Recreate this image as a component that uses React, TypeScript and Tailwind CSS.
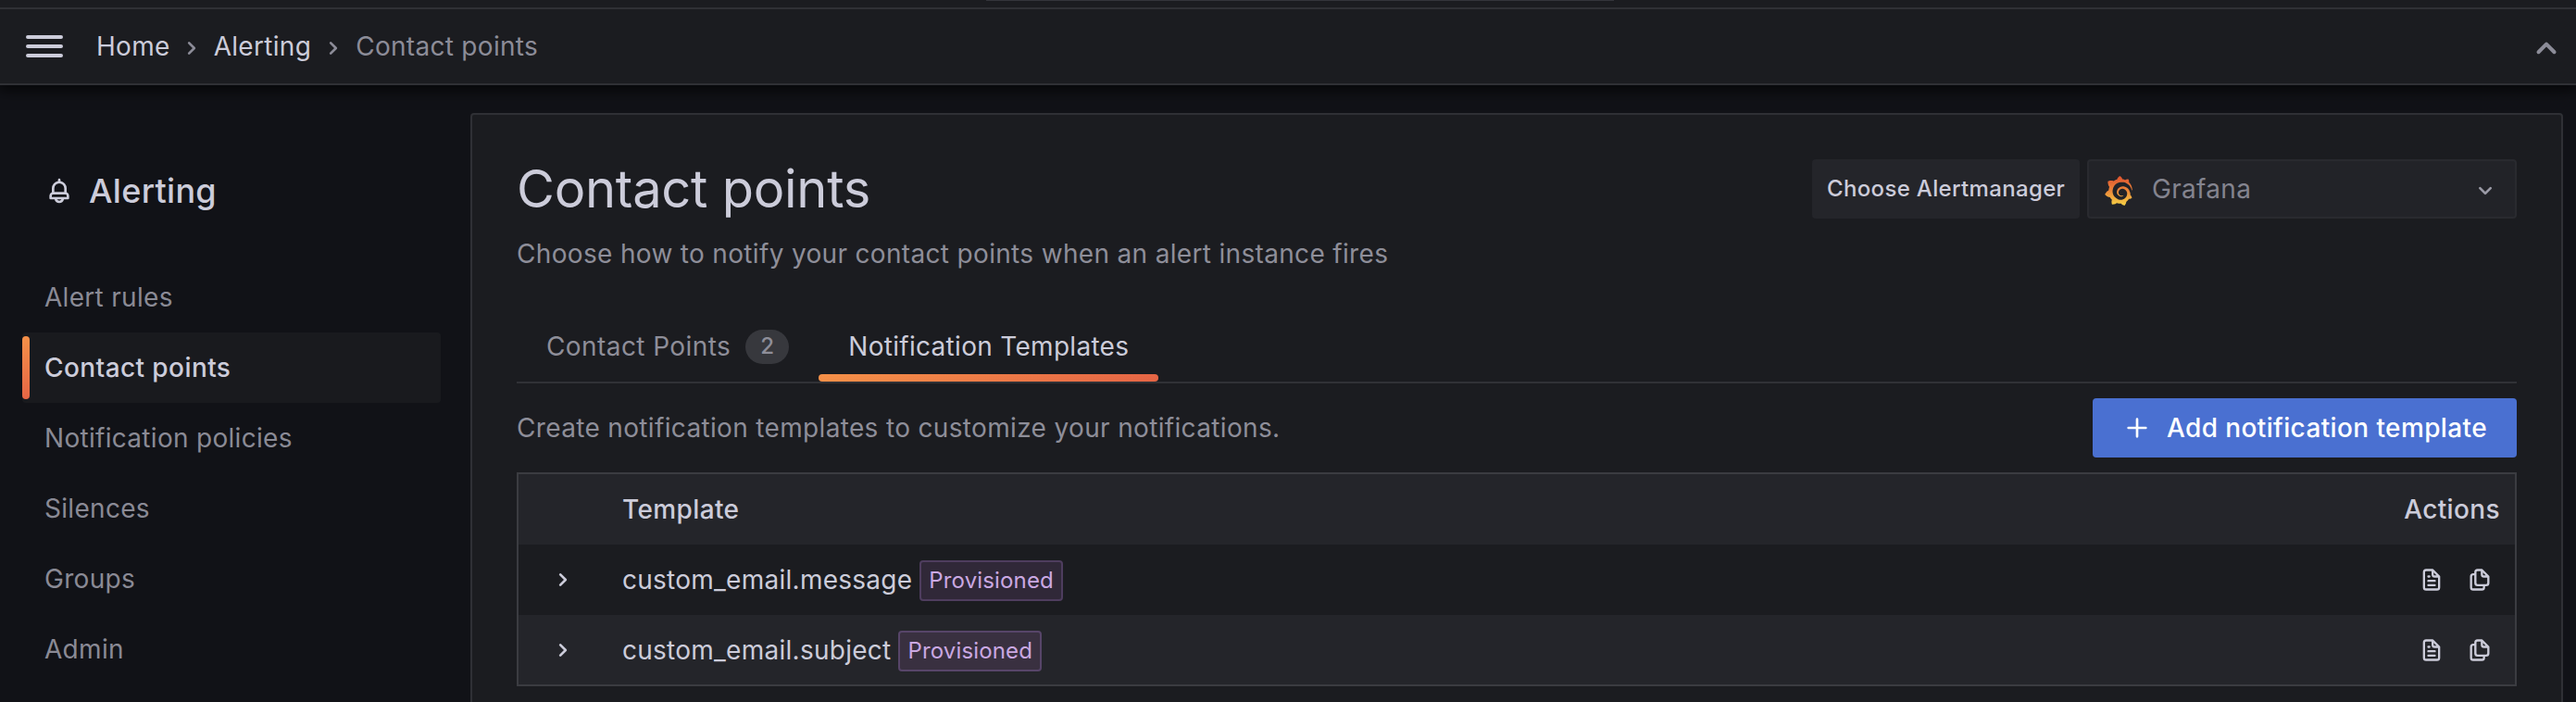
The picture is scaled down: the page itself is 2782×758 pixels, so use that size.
import React from 'react';
import { SiGrafana } from 'react-icons/si';

const paths = {
  bars: 'M3,8H21a1,1,0,0,0,0-2H3A1,1,0,0,0,3,8Zm18,8H3a1,1,0,0,0,0,2H21a1,1,0,0,0,0-2Zm0-5H3a1,1,0,0,0,0,2H21a1,1,0,0,0,0-2Z',
  bell: 'M18,13.18V10a6,6,0,0,0-5-5.91V3a1,1,0,0,0-2,0V4.09A6,6,0,0,0,6,10v3.18A3,3,0,0,0,4,16v2a1,1,0,0,0,1,1H8.14a4,4,0,0,0,7.72,0H19a1,1,0,0,0,1-1V16A3,3,0,0,0,18,13.18ZM8,10a4,4,0,0,1,8,0v3H8Zm4,10a2,2,0,0,1-1.72-1h3.44A2,2,0,0,1,12,20Zm6-3H6V16a1,1,0,0,1,1-1H17a1,1,0,0,1,1,1Z',
  right: 'M14.83,11.29,10.59,7.05a1,1,0,0,0-1.42,0,1,1,0,0,0,0,1.41L12.71,12,9.17,15.54a1,1,0,0,0,0,1.41,1,1,0,0,0,.71.29,1,1,0,0,0,.71-.29l4.24-4.24A1,1,0,0,0,14.83,11.29Z',
  up: 'M17,13.41,12.71,9.17a1,1,0,0,0-1.42,0L7.05,13.41a1,1,0,0,0,0,1.42,1,1,0,0,0,1.41,0L12,11.29l3.54,3.54a1,1,0,0,0,.7.29,1,1,0,0,0,.71-.29A1,1,0,0,0,17,13.41Z',
  down: 'M17,9.17a1,1,0,0,0-1.41,0L12,12.71,8.46,9.17a1,1,0,0,0-1.41,0,1,1,0,0,0,0,1.42l4.24,4.24a1,1,0,0,0,1.42,0L17,10.59A1,1,0,0,0,17,9.17Z',
  plus: 'M19,11H13V5a1,1,0,0,0-2,0v6H5a1,1,0,0,0,0,2h6v6a1,1,0,0,0,2,0V13h6a1,1,0,0,0,0-2Z',
  file: 'M9,10h1a1,1,0,0,0,0-2H9a1,1,0,0,0,0,2Zm0,2a1,1,0,0,0,0,2h6a1,1,0,0,0,0-2ZM20,8.94a1.31,1.31,0,0,0-.06-.27l0-.09a1.07,1.07,0,0,0-.19-.28h0l-6-6h0a1.07,1.07,0,0,0-.28-.19.32.32,0,0,0-.09,0A.88.88,0,0,0,13.05,2H7A3,3,0,0,0,4,5V19a3,3,0,0,0,3,3H17a3,3,0,0,0,3-3V9S20,9,20,8.94ZM14,5.41,16.59,8H15a1,1,0,0,1-1-1ZM18,19a1,1,0,0,1-1,1H7a1,1,0,0,1-1-1V5A1,1,0,0,1,7,4h5V7a3,3,0,0,0,3,3h3Zm-3-3H9a1,1,0,0,0,0,2h6a1,1,0,0,0,0-2Z',
  copy: 'M21,8.94a1.31,1.31,0,0,0-.06-.27l0-.09a1.07,1.07,0,0,0-.19-.28h0l-6-6h0a1.07,1.07,0,0,0-.28-.19.32.32,0,0,0-.09,0L14.06,2H10A3,3,0,0,0,7,5V6H6A3,3,0,0,0,3,9V19a3,3,0,0,0,3,3h8a3,3,0,0,0,3-3V18h1a3,3,0,0,0,3-3V9S21,9,21,8.94ZM15,5.41,17.59,8H16a1,1,0,0,1-1-1ZM15,19a1,1,0,0,1-1,1H6a1,1,0,0,1-1-1V9A1,1,0,0,1,6,8H7v7a3,3,0,0,0,3,3h5Zm4-4a1,1,0,0,1-1,1H10a1,1,0,0,1-1-1V5a1,1,0,0,1,1-1h3V7a3,3,0,0,0,3,3h3Z',
};

function Icon({ name, className }: { name: keyof typeof paths; className: string }) {
  return (
    <svg viewBox="0 0 24 24" fill="currentColor" className={`shrink-0 ${className}`}>
      <path d={paths[name]} />
    </svg>
  );
}

function TopBar() {
  return (
    <header className="relative z-10 shrink-0 bg-[#1b1c20] shadow-[0_4px_14px_2px_rgba(0,0,0,0.65)]">
      <div className="flex h-2 justify-center pl-[26px]">
        <div className="h-px w-[678px] bg-[#34353b]" />
      </div>
      <div className="flex h-[84px] items-center border-y-2 border-[#2f3035] pl-6 pr-2">
        <Icon name="bars" className="size-12" />
        <nav className="ml-8 flex items-center">
          <a>Home</a>
          <Icon name="right" className="ml-[7px] mr-2 mt-1 size-8 text-[#8c8c98]" />
          <a>Alerting</a>
          <Icon name="right" className="mx-2 mt-1 size-8 text-[#8c8c98]" />
          <span className="text-[#8c8c98]">Contact points</span>
        </nav>
        <Icon name="up" className="ml-auto mt-1 size-12 text-[#8c8c98]" />
      </div>
    </header>
  );
}

const links = ['Alert rules', 'Contact points', 'Notification policies', 'Silences', 'Groups', 'Admin'];

function Sidebar() {
  return (
    <aside className="w-[508px] shrink-0 pl-6 pr-8 pt-[86px]">
      <div className="flex h-14 items-center pl-6 text-[36px] font-medium tracking-[0.3px]">
        <Icon name="bell" className="mr-4 size-8" />
        Alerting
      </div>
      <ul className="mt-[49px]">
        {links.map((l) =>
          l === 'Contact points' ? (
            <li key={l} className="flex h-[76px] items-center rounded-[4px] bg-[#191a1e] font-medium">
              <span className="h-[68px] w-2 rounded-[4px] bg-linear-to-b from-[#f59048] to-[#e56545]" />
              <span className="ml-4 tracking-[0.42px]">{l}</span>
            </li>
          ) : (
            <li key={l} className="flex h-[76px] items-center pl-6 text-[#8a8a95]">
              {l}
            </li>
          ),
        )}
      </ul>
    </aside>
  );
}

function PageHeader() {
  return (
    <div className="flex items-start justify-between">
      <div>
        <h1 className="text-[56px] leading-[64px] tracking-[-0.25px]">Contact points</h1>
        <p className="mt-4 leading-[44px] tracking-[0.33px] text-[#8e8e99]">Choose how to notify your contact points when an alert instance fires</p>
      </div>
      <div className="flex gap-2">
        <label className="flex h-16 w-[289px] items-center whitespace-nowrap rounded-[4px] bg-[#24252a] pl-4 text-[24px] font-medium tracking-[0.34px]">
          Choose Alertmanager
        </label>
        <div className="flex h-16 w-[464px] items-center rounded-[4px] border-2 border-[#292a2f] bg-[#222328] pl-4 pr-4 text-[#84848f]">
          <svg className="size-0">
            <defs>
              <linearGradient id="sun" x1="0" y1="0" x2="0" y2="1">
                <stop offset="0" stopColor="#e0532f" />
                <stop offset="0.45" stopColor="#ea8038" />
                <stop offset="1" stopColor="#f6d245" />
              </linearGradient>
            </defs>
          </svg>
          <SiGrafana className="mt-1 size-8" fill="url(#sun)" />
          <span className="ml-5">Grafana</span>
          <Icon name="down" className="ml-auto mt-1 size-8 text-[#9a9aa6]" />
        </div>
      </div>
    </div>
  );
}

function Tabs() {
  return (
    <div className="mt-[40px] flex h-[78px] border-b-2 border-[#303136]">
      <div className="flex h-[76px] items-center px-8 tracking-[0.42px] text-[#8e8e99]">
        Contact Points
        <span className="ml-4 flex h-[37px] w-[47px] items-center justify-center rounded-[20px] bg-[#37383d] text-[24px] font-medium">2</span>
      </div>
      <div className="flex h-[76px] flex-col">
        <div className="flex flex-1 items-center px-8 pt-2">Notification Templates</div>
        <div className="h-2 rounded-[4px] bg-linear-to-r from-[#f59048] to-[#e56545]" />
      </div>
    </div>
  );
}

function Row({ name, className, badge }: { name: string; className: string; badge: string }) {
  return (
    <div className={`flex items-center ${className}`}>
      <Icon name="right" className="ml-8 size-8" />
      <span className="ml-[48px] tracking-[0.26px]">{name}</span>
      <span className={`ml-2 mt-[2px] flex h-11 items-center rounded-[4px] border-2 px-2 text-[24px] tracking-[0.15px] text-[#caa8e2] ${badge}`}>
        Provisioned
      </span>
      <Icon name="file" className="ml-auto size-7" />
      <Icon name="copy" className="ml-6 mr-6 size-7" />
    </div>
  );
}

export default function App() {
  return (
    <div className="flex h-[758px] w-[2782px] flex-col overflow-hidden bg-[#111217] font-['Inter',sans-serif] text-[28px] leading-[44px] tracking-[0.01071em] text-[#ccccda]">
      <TopBar />
      <div className="flex min-h-0 flex-1">
        <Sidebar />
        <main className="mr-[14px] mt-[30px] h-[700px] flex-1 rounded-[4px] border-2 border-[#2f3035] bg-[#1b1c20] px-12 pt-12">
          <PageHeader />
          <Tabs />
          <div className="mt-4 flex h-16 items-center justify-between">
            <p className="tracking-[0.34px] text-[#8e8e99]">Create notification templates to customize your notifications.</p>
            <button className="flex h-16 w-[458px] items-center whitespace-nowrap rounded-[4px] bg-[#4a70d1] pl-8 font-medium tracking-[0.38px] text-white">
              <Icon name="plus" className="mr-4 size-8" />
              Add notification template
            </button>
          </div>
          <div className="mt-4 h-[231px] border-2 border-[#3b3c41]">
            <div className="flex h-[76px] items-center justify-between bg-[#24252a] pl-[112px] pr-4 font-medium tracking-[0.38px]">
              <span>Template</span>
              <span>Actions</span>
            </div>
            <Row name="custom_email.message" className="h-[76px]" badge="border-[#4e3d5e] bg-[#302838]" />
            <Row name="custom_email.subject" className="h-[75px] bg-[#24252a]" badge="border-[#574569] bg-[#393040]" />
          </div>
        </main>
      </div>
    </div>
  );
}
